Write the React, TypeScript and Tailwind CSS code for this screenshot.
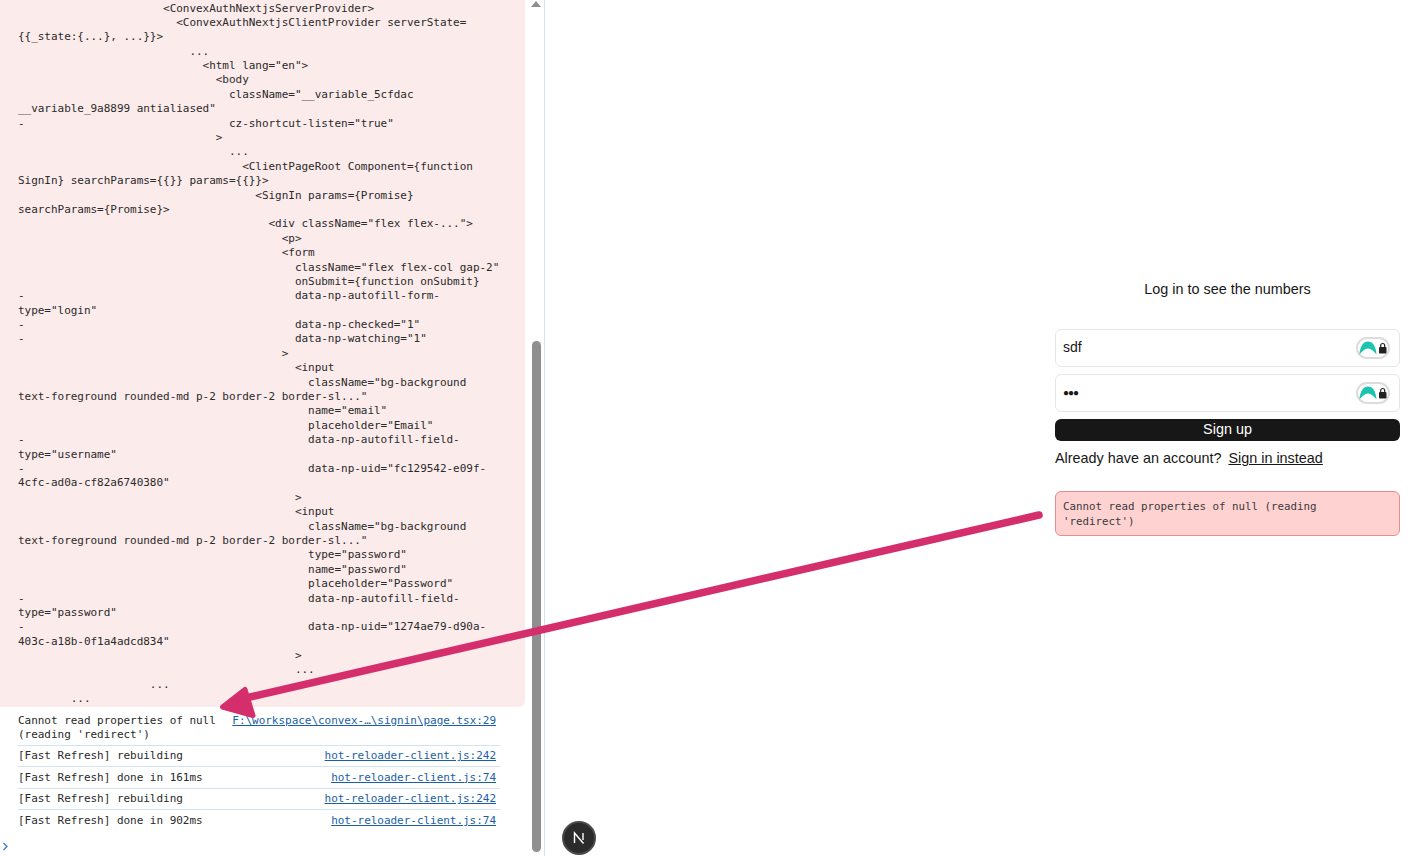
import React from 'react';

const traceLines = [
  '                      <ConvexAuthNextjsServerProvider>',
  '                        <ConvexAuthNextjsClientProvider serverState=',
  '{{_state:{...}, ...}}>',
  '                          ...',
  '                            <html lang="en">',
  '                              <body',
  '                                className="__variable_5cfdac',
  '__variable_9a8899 antialiased"',
  '-                               cz-shortcut-listen="true"',
  '                              >',
  '                                ...',
  '                                  <ClientPageRoot Component={function',
  'SignIn} searchParams={{}} params={{}}>',
  '                                    <SignIn params={Promise}',
  'searchParams={Promise}>',
  '                                      <div className="flex flex-...">',
  '                                        <p>',
  '                                        <form',
  '                                          className="flex flex-col gap-2"',
  '                                          onSubmit={function onSubmit}',
  '-                                         data-np-autofill-form-',
  'type="login"',
  '-                                         data-np-checked="1"',
  '-                                         data-np-watching="1"',
  '                                        >',
  '                                          <input',
  '                                            className="bg-background',
  'text-foreground rounded-md p-2 border-2 border-sl..."',
  '                                            name="email"',
  '                                            placeholder="Email"',
  '-                                           data-np-autofill-field-',
  'type="username"',
  '-                                           data-np-uid="fc129542-e09f-',
  '4cfc-ad0a-cf82a6740380"',
  '                                          >',
  '                                          <input',
  '                                            className="bg-background',
  'text-foreground rounded-md p-2 border-2 border-sl..."',
  '                                            type="password"',
  '                                            name="password"',
  '                                            placeholder="Password"',
  '-                                           data-np-autofill-field-',
  'type="password"',
  '-                                           data-np-uid="1274ae79-d90a-',
  '403c-a18b-0f1a4adcd834"',
  '                                          >',
  '                                          ...',
  '                    ...',
  '        ...',
];

const logs = [
  { text: '[Fast Refresh] rebuilding', file: 'hot-reloader-client.js:242' },
  { text: '[Fast Refresh] done in 161ms', file: 'hot-reloader-client.js:74' },
  { text: '[Fast Refresh] rebuilding', file: 'hot-reloader-client.js:242' },
  { text: '[Fast Refresh] done in 902ms', file: 'hot-reloader-client.js:74' },
];

function PassBadge() {
  return (
    <div className="flex items-center justify-center w-[34px] h-[22px] rounded-full bg-white border-2 border-[#dcdcdc]">
      <svg width="28" height="14" viewBox="0 0 28 14">
        <path d="M0.5 13.5 C1 5 4.5 0.5 9 0.5 C13.5 0.5 17 5 17.5 13.5 C15.5 11 12 7.5 9 7.5 C6 7.5 2.5 11 0.5 13.5 Z" fill="#1cc4b0" />
        <rect x="20" y="6" width="7.5" height="6.5" rx="1" fill="#222" />
        <path d="M21.7 6.5 V4.5 a2 2 0 0 1 4 0 V6.5" fill="none" stroke="#222" strokeWidth="1.2" />
      </svg>
    </div>
  );
}

function Field({ children }: { children: React.ReactNode }) {
  return (
    <div className="flex items-center justify-between h-[38px] pl-[7px] pr-[9px] pb-[1px] border border-[#e6e6e6] rounded-md bg-white">
      {children}
      <PassBadge />
    </div>
  );
}

export default function App() {
  return (
    <div className="relative flex h-[856px] w-[1424px] overflow-hidden bg-white text-[#171717] font-['Liberation_Sans',sans-serif]">
      {/* Console */}
      <div className="flex w-[545px] shrink-0 border-r border-[#d5e1f0]">
        <div className="w-[528px] shrink-0 font-['DejaVu_Sans_Mono',monospace] text-[11px] tracking-[-0.03px] text-[#2a2a2a]">
          <div className="w-[525px] h-[707px] pl-[18px] pt-[1.5px] bg-[#fcebeb] rounded-br-md overflow-hidden">
            {traceLines.map((line, i) => (
              <div key={i} className="h-[14.4px] leading-[14.4px] whitespace-pre">{line}</div>
            ))}
          </div>
          <div className="ml-[18px] w-[482px] pr-[4px] pt-[6.5px] flex justify-between border-b border-[#d3e3f3] leading-[14.4px] h-[39px]">
            <span className="w-[205px]">Cannot read properties of null (reading 'redirect')</span>
            <span className="text-[#1a5ea8] underline whitespace-nowrap">F:\workspace\convex-…\signin\page.tsx:29</span>
          </div>
          {logs.map((log, i) => (
            <div key={i} className={`ml-[18px] w-[482px] pr-[4px] pt-[1px] h-[21.4px] flex items-center justify-between ${i < 3 ? 'border-b border-[#d3e3f3]' : ''}`}>
              <span className="whitespace-pre">{log.text}</span>
              <span className="text-[#1a5ea8] underline">{log.file}</span>
            </div>
          ))}
          <div className="pl-[2px] pt-[10px]">
            <svg width="7" height="9" viewBox="0 0 7 9">
              <path d="M1.5 1 L5 4.5 L1.5 8" fill="none" stroke="#3a7bc8" strokeWidth="1.3" />
            </svg>
          </div>
        </div>
        {/* Scrollbar */}
        <div className="w-[16px] flex flex-col items-center justify-between pb-[4px] pt-[1px]">
          <div className="w-0 h-0 border-l-[5px] border-r-[5px] border-b-[6px] border-l-transparent border-r-transparent border-b-[#8f8f8f]" />
          <div className="w-[9px] h-[511px] bg-[#8f8f8f] rounded-full ml-[1px]" />
        </div>
      </div>

      {/* Page */}
      <div className="flex-1 flex justify-end pr-[24px] pt-[281px]">
        <div className="w-[345px] flex flex-col text-[14px]">
          <p className="text-center leading-[16px] text-[14.4px] mb-[32px]">Log in to see the numbers</p>
          <div className="flex flex-col gap-[7px] mb-[7px]">
            <Field><span>sdf</span></Field>
            <Field><span className="text-[10px] tracking-[-1px]">●●●</span></Field>
          </div>
          <button className="h-[22px] pb-[2px] bg-[#171717] text-white rounded-md leading-[20px] text-[14.4px]">Sign up</button>
          <div className="flex gap-[7px] mt-[9px] leading-[17px] text-[14.4px]">
            <span>Already have an account?</span>
            <a className="underline">Sign in instead</a>
          </div>
          <div className="mt-[24px] h-[45px] px-[7px] pt-[7px] bg-[#ffd2d2] border border-[#e58c8c] rounded-md font-['DejaVu_Sans_Mono',monospace] text-[10.8px] leading-[15px] text-[#3a3a3a]">
            Cannot read properties of null (reading 'redirect')
          </div>
        </div>
      </div>

      {/* Dev indicator */}
      <div className="absolute left-[562px] top-[821px] w-[34px] h-[34px] rounded-full bg-[#2b2b2b] border-2 border-[#4a4a4a] flex items-center justify-center">
        <svg width="14" height="14" viewBox="0 0 14 14">
          <path d="M2.5 12 V2 L11.5 12.5 M11 2 V9" fill="none" stroke="#fff" strokeWidth="1.4" />
        </svg>
      </div>

      {/* Annotation arrow */}
      <svg className="absolute left-0 top-0 pointer-events-none" width="1424" height="856">
        <path d="M1039 515 L246 698" fill="none" stroke="#d42f6c" strokeWidth="7.5" strokeLinecap="round" />
        <path d="M222.5 707 L245 689.5 L253 715.5 Z" fill="#d42f6c" stroke="#d42f6c" strokeWidth="5" strokeLinejoin="round" />
      </svg>
    </div>
  );
}
